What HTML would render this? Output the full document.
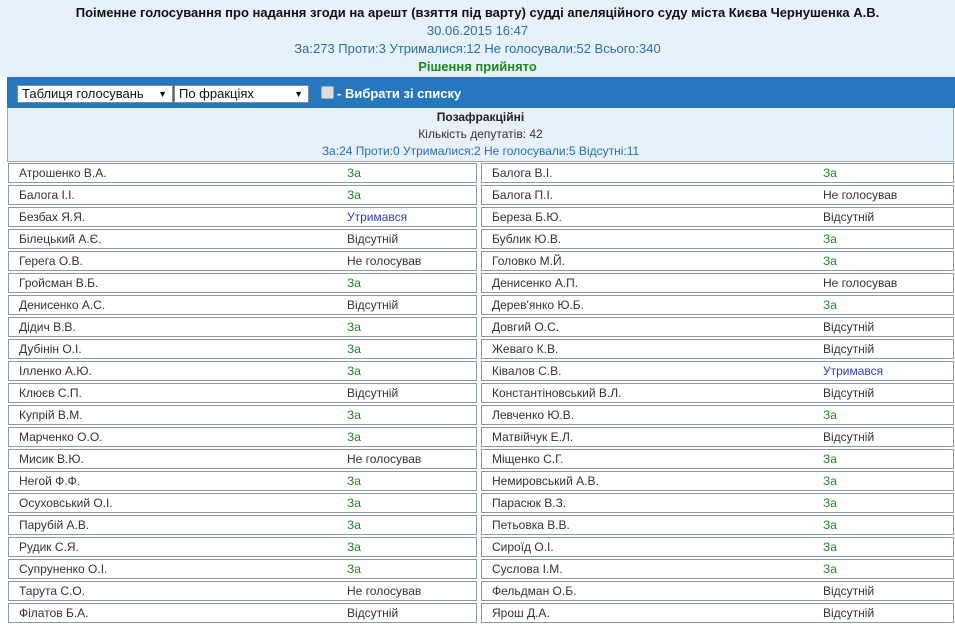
<!DOCTYPE html>
<html><head><meta charset="utf-8"><style>
body{margin:0;width:955px;height:624px;overflow:hidden;background:#fff;font-family:"Liberation Sans",Arial,sans-serif;font-size:12px;color:#333}
.hdr{position:absolute;left:0;top:0;width:955px;height:77px;background:#e6f1fa;text-align:center;font-size:13px;line-height:18px}
.hdr .t{font-weight:bold;color:#111;margin-top:4px}
.hdr .b{color:#2a6fb0}
.hdr .g{color:#1e8a1e;font-weight:bold}
.bar{position:absolute;left:7px;top:77px;width:948px;height:31px;background:#2677bd}
.sel{position:absolute;top:8px;height:18px;background:#fff;border:1px solid #888;box-sizing:border-box;font-size:13px;line-height:16px;padding-left:4px;color:#111}
.sel span{position:absolute;right:5px;top:0;font-size:9px}
.chk{position:absolute;left:314px;top:9px;width:11px;height:11px;background:#ddd;border:1px solid #aaa;border-radius:2px}
.lbl{position:absolute;left:330px;top:9px;color:#fff;font-weight:bold;font-size:13px}
.fr{position:absolute;left:7px;top:108px;width:945px;height:53px;background:#e6f1fa;border:1px solid #9ab;border-top:none;text-align:center;line-height:17px}
.row{position:absolute;height:20px;box-sizing:border-box;border:1px solid #8a99a8;line-height:18px}
.row .n{position:absolute;left:10px}
.row .s{position:absolute}
.z{color:#1e8a1e}.u{color:#2a3fc0}
</style></head><body>
<div class="hdr">
<div class="t">Поіменне голосування про надання згоди на арешт (взяття під варту) судді апеляційного суду міста Києва Чернушенка А.В.</div>
<div class="b">30.06.2015 16:47</div>
<div class="b">За:273 Проти:3 Утрималися:12 Не голосували:52 Всього:340</div>
<div class="g">Рішення прийнято</div>
</div>
<div class="bar">
<div class="sel" style="left:10px;width:156px">Таблиця голосувань<span>▼</span></div>
<div class="sel" style="left:167px;width:135px">По фракціях<span>▼</span></div>
<div class="chk"></div>
<div class="lbl">- Вибрати зі списку</div>
</div>
<div class="fr">
<div style="font-weight:bold;color:#222;margin-top:1px">Позафракційні</div>
<div>Кількість депутатів: 42</div>
<div style="color:#2a6fb0">За:24 Проти:0 Утрималися:2 Не голосували:5 Відсутні:11</div>
</div>
<div id="rows"></div>
<script>
var L=[["Атрошенко В.А.","За"],["Балога І.І.","За"],["Безбах Я.Я.","Утримався"],["Білецький А.Є.","Відсутній"],["Герега О.В.","Не голосував"],["Гройсман В.Б.","За"],["Денисенко А.С.","Відсутній"],["Дідич В.В.","За"],["Дубінін О.І.","За"],["Ілленко А.Ю.","За"],["Клюєв С.П.","Відсутній"],["Купрій В.М.","За"],["Марченко О.О.","За"],["Мисик В.Ю.","Не голосував"],["Негой Ф.Ф.","За"],["Осуховський О.І.","За"],["Парубій А.В.","За"],["Рудик С.Я.","За"],["Супруненко О.І.","За"],["Тарута С.О.","Не голосував"],["Філатов Б.А.","Відсутній"]];
var R=[["Балога В.І.","За"],["Балога П.І.","Не голосував"],["Береза Б.Ю.","Відсутній"],["Бублик Ю.В.","За"],["Головко М.Й.","За"],["Денисенко А.П.","Не голосував"],["Дерев'янко Ю.Б.","За"],["Довгий О.С.","Відсутній"],["Жеваго К.В.","Відсутній"],["Ківалов С.В.","Утримався"],["Константіновський В.Л.","Відсутній"],["Левченко Ю.В.","За"],["Матвійчук Е.Л.","Відсутній"],["Міщенко С.Г.","За"],["Немировський А.В.","За"],["Парасюк В.З.","За"],["Петьовка В.В.","За"],["Сироїд О.І.","За"],["Суслова І.М.","За"],["Фельдман О.Б.","Відсутній"],["Ярош Д.А.","Відсутній"]];
function c(s){return s=="За"?"z":(s=="Утримався"?"u":"")}
var h="";
for(var i=0;i<21;i++){var t=163+i*22;
h+='<div class="row" style="left:8px;top:'+t+'px;width:469px"><span class="n">'+L[i][0]+'</span><span class="s '+c(L[i][1])+'" style="left:338px">'+L[i][1]+'</span></div>';
h+='<div class="row" style="left:481px;top:'+t+'px;width:473px"><span class="n">'+R[i][0]+'</span><span class="s '+c(R[i][1])+'" style="left:341px">'+R[i][1]+'</span></div>';}
document.getElementById("rows").innerHTML=h;
</script>
</body></html>
